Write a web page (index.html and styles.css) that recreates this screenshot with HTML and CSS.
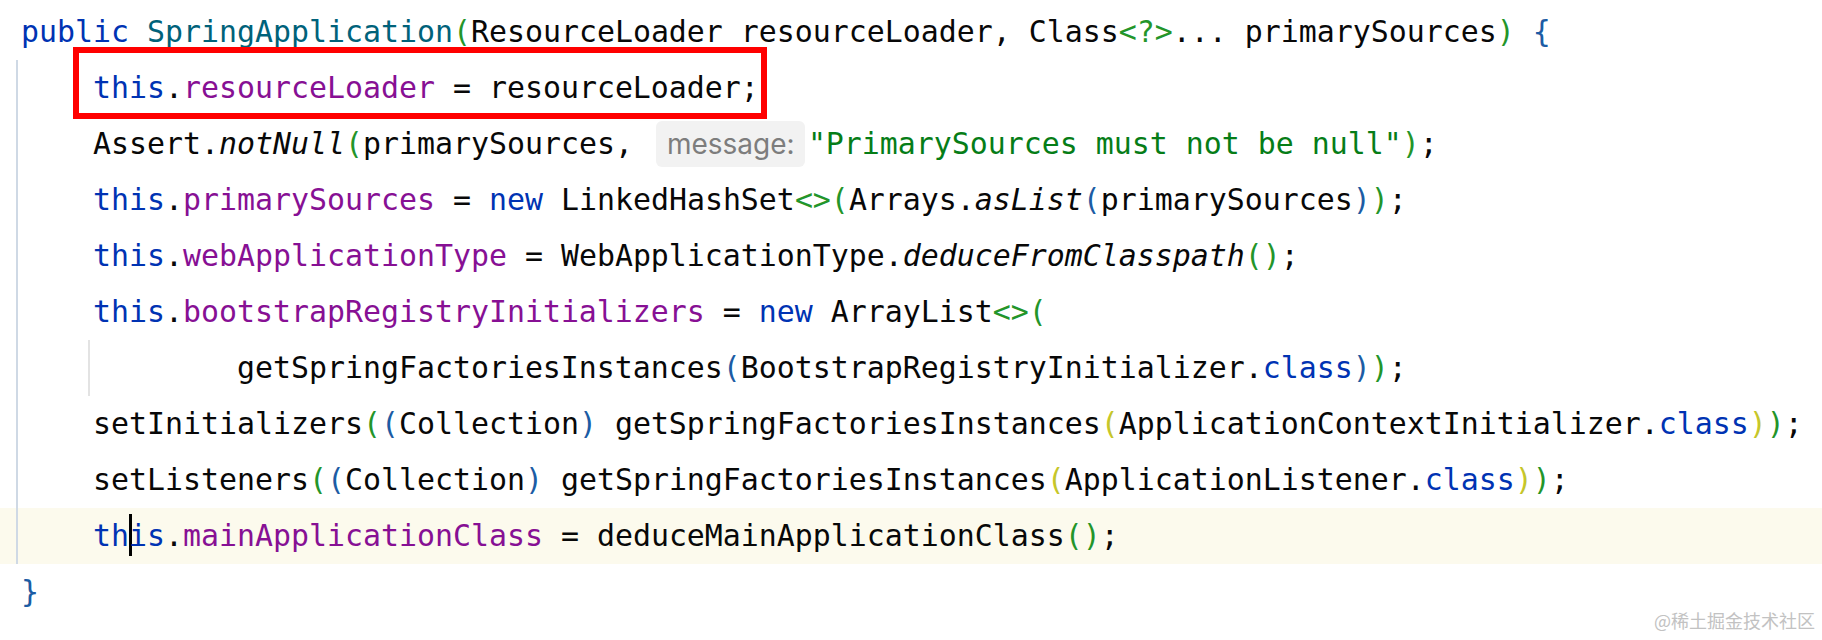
FILE: index.html
```html
<!DOCTYPE html>
<html>
<head>
<meta charset="utf-8">
<link rel="stylesheet" href="styles.css">
</head>
<body>
<div class="editor">
<div class="line"><span class="kw">public</span> <span class="decl">SpringApplication</span><span class="b1">(</span>ResourceLoader resourceLoader, Class<span class="b1">&lt;?&gt;</span>... primarySources<span class="b1">)</span> <span class="brace">{</span></div>
<div class="body">
<div class="line">    <span class="kw">this</span>.<span class="fld">resourceLoader</span> = resourceLoader;</div>
<div class="line">    Assert.<i class="st">notNull</i><span class="b1">(</span>primarySources, <span class="hint">message:</span><span class="str">"PrimarySources must not be null"</span><span class="b1">)</span>;</div>
<div class="line">    <span class="kw">this</span>.<span class="fld">primarySources</span> = <span class="kw">new</span> LinkedHashSet<span class="b1">&lt;&gt;(</span>Arrays.<i class="st">asList</i><span class="b2">(</span>primarySources<span class="b2">)</span><span class="b1">)</span>;</div>
<div class="line">    <span class="kw">this</span>.<span class="fld">webApplicationType</span> = WebApplicationType.<i class="st">deduceFromClasspath</i><span class="b1">()</span>;</div>
<div class="line">    <span class="kw">this</span>.<span class="fld">bootstrapRegistryInitializers</span> = <span class="kw">new</span> ArrayList<span class="b1">&lt;&gt;(</span></div>
<div class="line guided">            getSpringFactoriesInstances<span class="b2">(</span>BootstrapRegistryInitializer.<span class="kw">class</span><span class="b2">)</span><span class="b1">)</span>;</div>
<div class="line">    setInitializers<span class="b1">(</span><span class="b2">(</span>Collection<span class="b2">)</span> getSpringFactoriesInstances<span class="b3">(</span>ApplicationContextInitializer.<span class="kw">class</span><span class="b3">)</span><span class="b1">)</span>;</div>
<div class="line">    setListeners<span class="b1">(</span><span class="b2">(</span>Collection<span class="b2">)</span> getSpringFactoriesInstances<span class="b3">(</span>ApplicationListener.<span class="kw">class</span><span class="b3">)</span><span class="b1">)</span>;</div>
<div class="line current">    <span class="kw">th<span class="caret"></span>is</span>.<span class="fld">mainApplicationClass</span> = deduceMainApplicationClass<span class="b1">()</span>;</div>
</div>
<div class="line"><span class="brace">}</span></div>
<div class="mark"></div>
<div class="watermark">@稀土掘金技术社区</div>
</div>
</body>
</html>
```
FILE: styles.css
```css
html, body {
  margin: 0;
  padding: 0;
  background: #ffffff;
}
body {
  width: 1822px;
  height: 640px;
  overflow: hidden;
}
.editor {
  position: relative;
  padding-top: 4px;
  height: 636px;
  font-family: "DejaVu Sans Mono", "Liberation Mono", monospace;
  font-size: 29.9px;
  color: #080808;
}
.line {
  height: 56px;
  line-height: 56px;
  padding-left: 21px;
  white-space: pre;
}
.body {
  position: relative;
}
.body::before {
  content: "";
  position: absolute;
  left: 16px;
  top: 0;
  bottom: 0;
  width: 2px;
  background: #cfd9e5;
}
.guided {
  position: relative;
}
.guided::before {
  content: "";
  position: absolute;
  left: 88px;
  top: 0;
  bottom: 0;
  width: 2px;
  background: #e3e3e3;
}
.current {
  background: #fcfaed;
}
.kw { color: #0033b3; }
.decl { color: #00627a; }
.fld { color: #871094; }
.str { color: #067d17; }
.st { font-style: italic; }
.brace { color: #1c5ca4; }
.b1 { color: #23952a; }
.b2 { color: #1c5ca4; }
.b3 { color: #c6c62a; }
.hint {
  display: inline-block;
  box-sizing: border-box;
  width: 149px;
  height: 46px;
  line-height: 46px;
  margin: 0 3px 0 5px;
  padding-left: 11px;
  font-family: "Inter", "Noto Sans", sans-serif;
  font-size: 28px;
  color: #7d7d7d;
  background: #f2f2f2;
  border-radius: 6px;
}
.caret {
  display: inline-block;
  width: 3px;
  height: 42px;
  margin-right: -3px;
  vertical-align: -10px;
  background: #000000;
}
.mark {
  position: absolute;
  left: 73px;
  top: 47px;
  width: 694px;
  height: 72px;
  box-sizing: border-box;
  border: 6px solid #ff0000;
}
.watermark {
  position: absolute;
  right: 7px;
  top: 607px;
  font-family: "Noto Sans CJK SC", sans-serif;
  font-size: 18px;
  line-height: 26px;
  color: #c2c2c2;
}
```
